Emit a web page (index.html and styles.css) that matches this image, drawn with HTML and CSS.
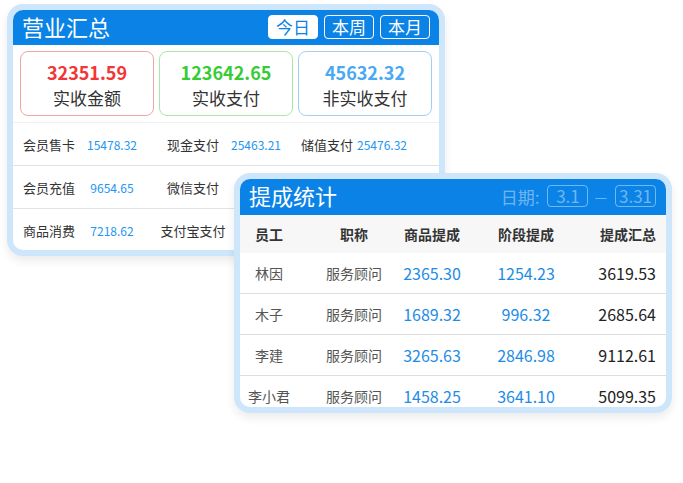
FILE: index.html
```html
<!DOCTYPE html>
<html lang="zh-CN">
<head>
  <meta charset="UTF-8">
  <title>营业汇总</title>
  <link rel="stylesheet" href="styles.css">
</head>
<body>

  <div class="board">
    <div class="card summary">
      <div class="card-head">
        <span class="card-title">营业汇总</span>
        <div class="tabs">
          <button class="tab active">今日</button>
          <button class="tab">本周</button>
          <button class="tab">本月</button>
        </div>
      </div>

      <div class="stats">
        <div class="stat red">
          <div class="stat-num">32351.59</div>
          <div class="stat-name">实收金额</div>
        </div>
        <div class="stat green">
          <div class="stat-num">123642.65</div>
          <div class="stat-name">实收支付</div>
        </div>
        <div class="stat blue">
          <div class="stat-num">45632.32</div>
          <div class="stat-name">非实收支付</div>
        </div>
      </div>

      <div class="detail">
        <div class="detail-row">
          <div class="item"><span class="label">会员售卡</span><span class="value">15478.32</span></div>
          <div class="item"><span class="label">现金支付</span><span class="value">25463.21</span></div>
          <div class="item tight"><span class="label">储值支付</span><span class="value">25476.32</span></div>
        </div>
        <div class="detail-row">
          <div class="item"><span class="label">会员充值</span><span class="value">9654.65</span></div>
          <div class="item"><span class="label">微信支付</span><span class="value">6325.14</span></div>
          <div class="item tight"><span class="label">其他支付</span><span class="value">1254.36</span></div>
        </div>
        <div class="detail-row">
          <div class="item"><span class="label">商品消费</span><span class="value">7218.62</span></div>
          <div class="item"><span class="label">支付宝支付</span><span class="value">4563.28</span></div>
          <div class="item tight"><span class="label">团购支付</span><span class="value">2365.47</span></div>
        </div>
      </div>
    </div>

    <div class="card commission">
      <div class="card-head">
        <span class="card-title">提成统计</span>
        <div class="dates">
          <span>日期:</span><span class="date-box">3.1</span><span class="dash">—</span><span class="date-box">3.31</span>
        </div>
      </div>

      <div class="table">
        <div class="tr th">
          <span>员工</span><span>职称</span><span>商品提成</span><span>阶段提成</span><span class="total">提成汇总</span>
        </div>
        <div class="tr">
          <span class="name">林因</span><span class="job">服务顾问</span><span class="num">2365.30</span><span class="num">1254.23</span><span class="total">3619.53</span>
        </div>
        <div class="tr">
          <span class="name">木子</span><span class="job">服务顾问</span><span class="num">1689.32</span><span class="num">996.32</span><span class="total">2685.64</span>
        </div>
        <div class="tr">
          <span class="name">李建</span><span class="job">服务顾问</span><span class="num">3265.63</span><span class="num">2846.98</span><span class="total">9112.61</span>
        </div>
        <div class="tr">
          <span class="name">李小君</span><span class="job">服务顾问</span><span class="num">1458.25</span><span class="num">3641.10</span><span class="total">5099.35</span>
        </div>
      </div>
    </div>
  </div>

</body>
</html>
```

FILE: styles.css
```css
body {
  margin: 0;
  background: #fff;
  font-family: "Noto Sans CJK SC", "Noto Sans", sans-serif;
  color: #333;
}

.board {
  position: relative;
  width: 683px;
  height: 483px;
  padding: 4px 0 0 7px;
  box-sizing: border-box;
}

.card {
  width: 426px;
  border: 6px solid #cde6fc;
  border-radius: 16px;
  background: #fff;
  overflow: hidden;
  box-shadow: 0 5px 10px rgba(0, 0, 0, 0.08);
}

.summary {
  height: 240px;
}

.commission {
  position: absolute;
  left: 234px;
  top: 173px;
  height: 228px;
}

.card-head {
  height: 36px;
  background: #0b83e6;
  display: flex;
  align-items: center;
  justify-content: space-between;
  padding: 0 10px 2px 9px;
  box-sizing: border-box;
}

.summary .card-head {
  height: 35px;
  padding-right: 9px;
}

.card-title {
  color: #fff;
  font-size: 22px;
  line-height: 1;
  margin-top: -2px;
}

.tabs {
  display: flex;
  gap: 6px;
}

.tab {
  width: 50px;
  height: 24px;
  padding: 0;
  font-family: inherit;
  font-size: 17px;
  line-height: 22px;
  color: #fff;
  background: transparent;
  border: 1px solid #fff;
  border-radius: 4px;
}

.tab.active {
  background: #fff;
  color: #0b83e6;
}

.stats {
  display: flex;
  gap: 5px;
  padding: 6px 7px 6px 7px;
}

.stat {
  width: 132px;
  height: 63px;
  border: 1px solid #ccc;
  border-radius: 8px;
  text-align: center;
}

.stat-num {
  font-size: 18px;
  font-weight: bold;
  line-height: 20px;
  margin-top: 10px;
}

.stat-name {
  font-size: 17px;
  line-height: 20px;
  margin-top: 6px;
  color: #333;
}

.red { border-color: #f3a4a4; }
.red .stat-num { color: #f33535; }
.green { border-color: #a9e8a4; }
.green .stat-num { color: #35cc35; }
.blue { border-color: #a3cff4; }
.blue .stat-num { color: #4aa9f2; }

.detail {
  border-top: 1px solid #f0f0f0;
}

.detail-row {
  display: flex;
  align-items: center;
  height: 42px;
  padding-left: 3px;
  border-bottom: 1px solid #e2e2e2;
}

.detail-row:last-child {
  border-bottom: none;
}

.item {
  display: flex;
  align-items: center;
  width: 144px;
}

.item + .item {
  width: 138px;
}

.label {
  width: 66px;
  text-align: center;
  font-size: 13px;
  color: #333;
  white-space: nowrap;
}

.value {
  width: 60px;
  text-align: center;
  font-size: 12px;
  color: #2196f3;
}

.item.tight .label {
  width: 58px;
}

.item.tight .value {
  width: 52px;
}

.dates {
  display: flex;
  align-items: center;
  font-size: 17px;
  color: rgba(255, 255, 255, 0.42);
}

.date-box {
  display: inline-block;
  min-width: 39px;
  height: 20px;
  line-height: 20px;
  text-align: center;
  margin-left: 8px;
  border: 1px solid rgba(255, 255, 255, 0.42);
  border-radius: 4px;
}

.dash {
  margin: 0 0 0 6px;
  font-size: 14px;
}

.tr {
  display: grid;
  grid-template-columns: 58px 112px 44px 144px 1fr;
  justify-items: center;
  align-items: center;
  height: 40px;
  border-bottom: 1px solid #dedede;
  font-size: 14px;
}

.tr span {
  white-space: nowrap;
}

.th {
  height: 38px;
  background: #f7f7f7;
  border-bottom: none;
  font-weight: bold;
  color: #333;
}

.tr .total {
  justify-self: end;
  padding-right: 10px;
  font-size: 16px;
  color: #222;
}

.name,
.job {
  color: #555;
}

.num {
  font-size: 16px;
  color: #1e8ce6;
}

.th .total {
  font-size: 14px;
  color: #333;
}
```
